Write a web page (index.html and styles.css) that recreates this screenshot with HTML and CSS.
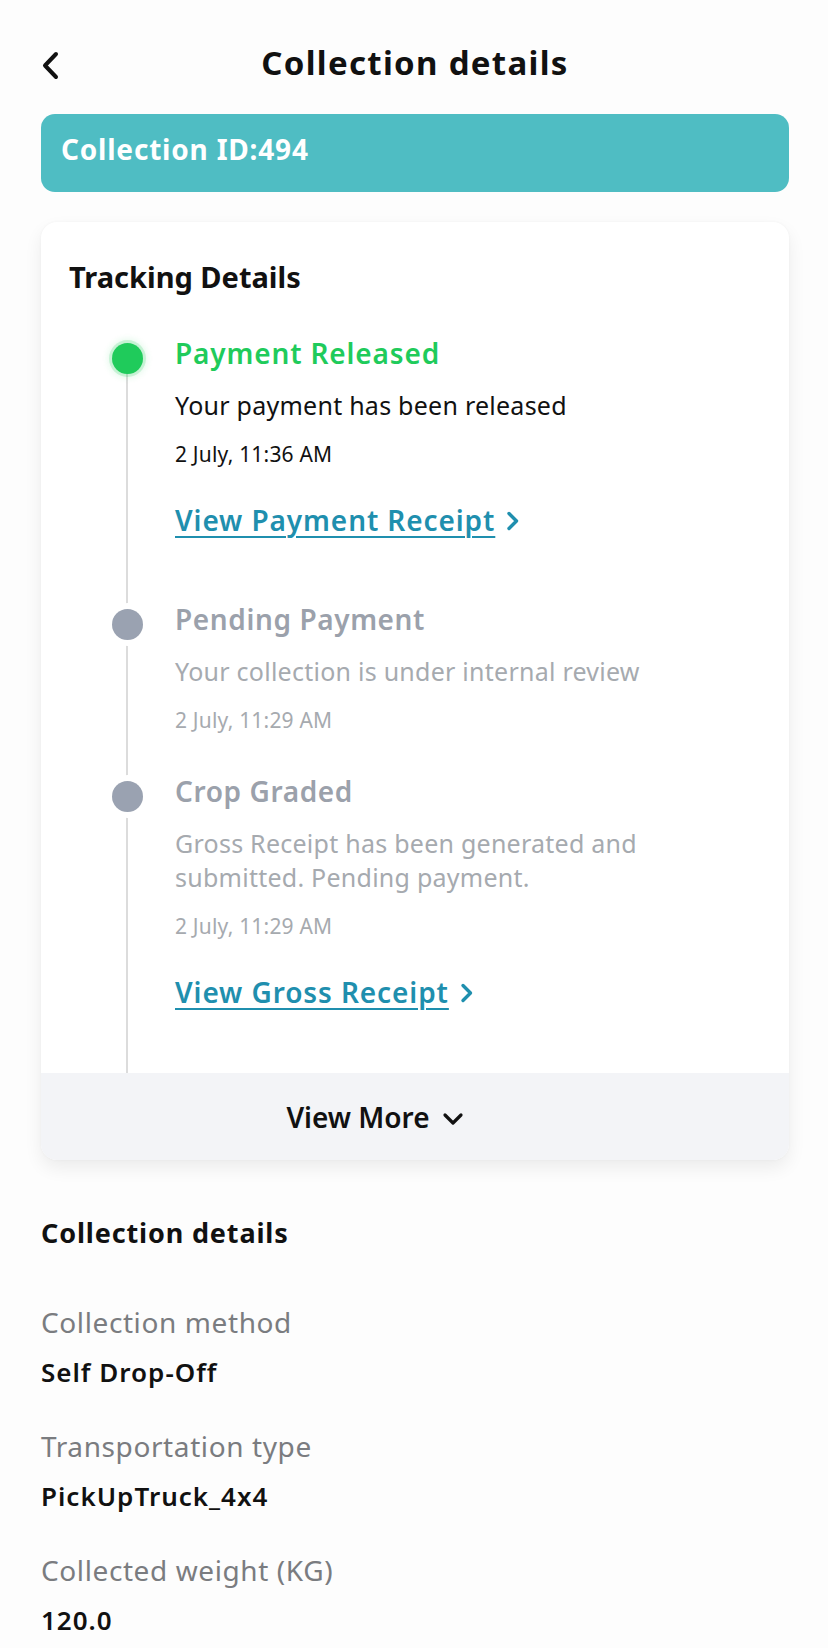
FILE: index.html
```html
<!DOCTYPE html>
<html lang="en">
<head>
<meta charset="utf-8">
<title>Collection details</title>
<link rel="stylesheet" href="styles.css">
</head>
<body>
<div class="page">
  <header class="topbar">
    <svg class="back" width="20" height="30" viewBox="0 0 20 30" aria-hidden="true">
      <path d="M15 3 L4 14.5 L15 26" fill="none" stroke="#111" stroke-width="4" stroke-linecap="round" stroke-linejoin="round"/>
    </svg>
    <h1 class="title">Collection details</h1>
  </header>

  <div class="idbar">Collection ID:494</div>

  <section class="card">
    <h2 class="card-title">Tracking Details</h2>
    <div class="timeline">
      <div class="item done">
        <span class="dot"></span>
        <div class="body">
          <div class="step">Payment Released</div>
          <div class="desc">Your payment has been released</div>
          <div class="date">2 July, 11:36 AM</div>
          <a class="link" href="#"><span class="u">View Payment Receipt</span><svg class="chev" width="14" height="20" viewBox="0 0 14 20" aria-hidden="true"><path d="M3 2.5 L10.5 10 L3 17.5" fill="none" stroke="#1f8fae" stroke-width="3.4" stroke-linecap="round" stroke-linejoin="round"/></svg></a>
        </div>
      </div>
      <div class="item">
        <span class="dot"></span>
        <div class="body">
          <div class="step">Pending Payment</div>
          <div class="desc">Your collection is under internal review</div>
          <div class="date">2 July, 11:29 AM</div>
        </div>
      </div>
      <div class="item">
        <span class="dot"></span>
        <div class="body">
          <div class="step">Crop Graded</div>
          <div class="desc">Gross Receipt has been generated and<br>submitted. Pending payment.</div>
          <div class="date">2 July, 11:29 AM</div>
          <a class="link" href="#"><span class="u">View Gross Receipt</span><svg class="chev" width="14" height="20" viewBox="0 0 14 20" aria-hidden="true"><path d="M3 2.5 L10.5 10 L3 17.5" fill="none" stroke="#1f8fae" stroke-width="3.4" stroke-linecap="round" stroke-linejoin="round"/></svg></a>
        </div>
      </div>
    </div>
    <div class="more">
      <span>View More</span>
      <svg width="22" height="14" viewBox="0 0 22 14" aria-hidden="true"><path d="M3 3 L11 11 L19 3" fill="none" stroke="#111" stroke-width="3.2" stroke-linecap="round" stroke-linejoin="round"/></svg>
    </div>
  </section>

  <section class="details">
    <h3 class="details-title">Collection details</h3>
    <div class="field">
      <div class="label">Collection method</div>
      <div class="value">Self Drop-Off</div>
    </div>
    <div class="field">
      <div class="label">Transportation type</div>
      <div class="value">PickUpTruck_4x4</div>
    </div>
    <div class="field">
      <div class="label">Collected weight (KG)</div>
      <div class="value">120.0</div>
    </div>
  </section>
</div>
</body>
</html>
```

FILE: styles.css
```css
* { box-sizing: border-box; }

html, body {
  margin: 0;
  padding: 0;
  background: #fdfdfd;
}

body {
  font-family: "Noto Sans", "Open Sans", sans-serif;
  color: #111;
}

.page {
  padding: 0 39px 0 41px;
  height: 1648px;
  overflow: hidden;
}

.topbar {
  position: relative;
  display: flex;
  justify-content: center;
  padding-top: 43px;
}

.back {
  position: absolute;
  left: 0;
  top: 51px;
}

.title {
  margin: 0;
  font-size: 33px;
  line-height: 40px;
  font-weight: 700;
  letter-spacing: 1.3px;
}

.idbar {
  margin-top: 31px;
  height: 78px;
  border-radius: 14px;
  background: #4fbdc3;
  color: #fff;
  font-size: 28px;
  font-weight: 700;
  line-height: 70px;
  letter-spacing: 0.8px;
  padding: 0 0 8px 20px;
}

.card {
  margin-top: 30px;
  background: #fff;
  border-radius: 16px;
  box-shadow: 0 8px 18px rgba(0, 0, 0, 0.07), 0 0 3px rgba(0, 0, 0, 0.04);
  overflow: hidden;
}

.card-title {
  margin: 0;
  padding: 37px 0 0 28px;
  font-size: 29px;
  line-height: 36px;
  font-weight: 700;
}

.timeline {
  position: relative;
  margin-top: 40px;
  padding-left: 71px;
}

.timeline::before {
  content: "";
  position: absolute;
  left: 85px;
  top: 20px;
  bottom: 0;
  width: 2px;
  background: #dcdcdc;
}

.item {
  position: relative;
  display: grid;
  grid-template-columns: 31px 1fr;
  column-gap: 32px;
  padding-bottom: 38px;
}

.dot {
  margin-top: 8px;
  width: 31px;
  height: 31px;
  border-radius: 50%;
  background: #9aa2b1;
  box-shadow: 0 0 0 6px #fff;
}

.item.done .dot {
  background: #1fcb5b;
  box-shadow: 0 0 0 3px rgba(31, 203, 91, 0.18), 0 0 6px 4px rgba(31, 203, 91, 0.12);
}

.step {
  font-size: 28px;
  line-height: 36px;
  font-weight: 600;
  letter-spacing: 0.6px;
  color: #9ba1ab;
}

.item.done .step {
  color: #1fcb5b;
  letter-spacing: 0.85px;
}

.desc {
  margin-top: 17px;
  font-size: 25px;
  line-height: 34px;
  letter-spacing: 0.25px;
  color: #a6aaaf;
}

.item.done .desc {
  color: #111;
}

.date {
  margin-top: 17px;
  font-size: 21px;
  line-height: 30px;
  letter-spacing: 0.2px;
  color: #a6aaaf;
}

.item.done .date {
  color: #111;
}

.link {
  display: inline-flex;
  align-items: center;
  gap: 11px;
  margin-top: 33px;
  margin-bottom: 25px;
  font-size: 28px;
  line-height: 36px;
  font-weight: 600;
  letter-spacing: 0.9px;
  color: #1f8fae;
  text-decoration: none;
}

.link .u {
  text-decoration: underline;
  text-decoration-thickness: 2px;
  text-underline-offset: 5px;
}

.chev {
  margin-top: 2px;
}

.more {
  display: flex;
  align-items: center;
  justify-content: center;
  gap: 12px;
  height: 87px;
  padding-right: 80px;
  background: #f3f4f7;
  font-size: 28px;
  font-weight: 600;
  color: #111;
}

.more svg {
  margin-top: 4px;
}

.details-title {
  margin: 56px 0 0;
  font-size: 27px;
  line-height: 34px;
  font-weight: 700;
  letter-spacing: 0.85px;
}

.field:first-of-type {
  margin-top: 55px;
}

.field + .field {
  margin-top: 40px;
}

.label {
  font-size: 28px;
  line-height: 34px;
  letter-spacing: 0.6px;
  color: #7a7c80;
}

.value {
  margin-top: 16px;
  font-size: 26px;
  line-height: 34px;
  font-weight: 600;
  letter-spacing: 1px;
  color: #111;
}
```
